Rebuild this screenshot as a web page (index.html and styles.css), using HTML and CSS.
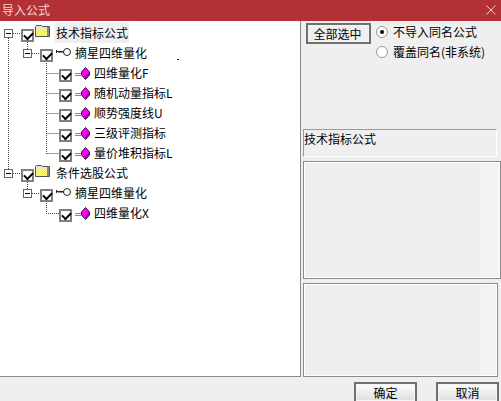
FILE: index.html
```html
<!DOCTYPE html>
<html lang="zh">
<head>
<meta charset="utf-8">
<title>导入公式</title>
<link rel="stylesheet" href="styles.css">
</head>
<body>
<svg class="defs" width="0" height="0">
  <defs>
    <pattern id="dither" width="2" height="2" patternUnits="userSpaceOnUse">
      <rect width="2" height="2" fill="#fff200"/>
      <rect width="1" height="1" fill="#ffff70"/>
      <rect x="1" y="1" width="1" height="1" fill="#ffff70"/>
    </pattern>
    <symbol id="folder" viewBox="0 0 15 12">
      <path d="M.5 11.500V1.500L1.500 .5H6.500L7.500 1.500H14.500V11.500Z" fill="#e4e4dc" stroke="#55554c"/>
      <rect x="1" y="4" width="11" height="7" fill="url(#dither)"/>
      <rect x="12" y="2" width="2" height="9" fill="#8a8a80"/>
    </symbol>
    <symbol id="key" viewBox="0 0 16 8">
      <circle cx="12" cy="4" r="3.500" fill="#fff" stroke="#222"/>
      <path d="M1.500 2V5M1.500 3.500H8.500" stroke="#222" fill="none"/>
      <path d="M3 4.500H8" stroke="#888" fill="none"/>
    </symbol>
    <symbol id="gem" viewBox="0 0 16 13">
      <path d="M1 6.500H7M1 8.500H7" stroke="#8a8a8a"/>
      <path d="M11.500 .5L15.500 5V8L11.500 12.500L7.500 8V5Z" fill="#f0f" stroke="#301030"/>
      <path d="M11.500 8L15 6V8L11.500 12Z" fill="#900090"/>
    </symbol>
  </defs>
</svg>
<div class="window">
  <header class="titlebar">
    <span class="title">导入公式</span>
    <svg class="close" width="10" height="10" viewBox="0 0 10 10"><path d="M.5 .5L9.500 9.500M9.500 .5L.5 9.500" stroke="#f0cfd0" fill="none"/></svg>
  </header>
  <main class="main">
    <section class="tree">
      <svg class="guides" width="100" height="225" viewBox="0 0 100 225">
        <path d="M8.500 17V148M13 12.500H21M13 152.500H21M27.500 21V28M27.500 161V168M32 32.500H40M32 172.500H40M46.500 42V133M46.500 52.500H59M46.500 72.500H59M46.500 92.500H59M46.500 112.500H59M46.500 132.500H59M46.500 182V192.500H59" stroke="#444" stroke-dasharray="1 1" fill="none"/>
      </svg>
      <span class="speck"></span>
      <div class="row lvl1"><span class="exp"></span><span class="chk"></span>
        <svg class="folder"><use href="#folder"/></svg>
        <span class="label selected">技术指标公式</span></div>
      <div class="row lvl2"><span class="exp"></span><span class="chk"></span>
        <svg class="key"><use href="#key"/></svg>
        <span class="label">摘星四维量化</span></div>
      <div class="row lvl3"><span class="chk"></span><svg class="gem"><use href="#gem"/></svg><span class="label">四维量化F</span></div>
      <div class="row lvl3"><span class="chk"></span><svg class="gem"><use href="#gem"/></svg><span class="label">随机动量指标L</span></div>
      <div class="row lvl3"><span class="chk"></span><svg class="gem"><use href="#gem"/></svg><span class="label">顺势强度线U</span></div>
      <div class="row lvl3"><span class="chk"></span><svg class="gem"><use href="#gem"/></svg><span class="label">三级评测指标</span></div>
      <div class="row lvl3"><span class="chk"></span><svg class="gem"><use href="#gem"/></svg><span class="label">量价堆积指标L</span></div>
      <div class="row lvl1"><span class="exp"></span><span class="chk"></span>
        <svg class="folder"><use href="#folder"/></svg>
        <span class="label">条件选股公式</span></div>
      <div class="row lvl2"><span class="exp"></span><span class="chk"></span>
        <svg class="key"><use href="#key"/></svg>
        <span class="label">摘星四维量化</span></div>
      <div class="row lvl3"><span class="chk"></span><svg class="gem"><use href="#gem"/></svg><span class="label">四维量化X</span></div>
    </section>
    <aside class="side">
      <div class="options">
        <button class="btn select-all" type="button">全部选中</button>
        <div class="radios">
          <div class="radio-row"><span class="radio on"></span><span>不导入同名公式</span></div>
          <div class="radio-row"><span class="radio"></span><span>覆盖同名(非系统)</span></div>
        </div>
      </div>
      <div class="info">技术指标公式</div>
      <div class="well well-top"></div>
      <div class="well well-bottom"></div>
    </aside>
  </main>
  <footer class="footer">
    <button class="btn action" type="button">确定</button>
    <button class="btn action" type="button">取消</button>
  </footer>
</div>
</body>
</html>
```
FILE: styles.css
```css
* { box-sizing: border-box; }
html, body { margin: 0; padding: 0; }
body {
  width: 501px;
  height: 401px;
  overflow: hidden;
  background: #efefef;
  color: #000;
  font: 12px/16px "Noto Sans CJK SC", "Liberation Sans", sans-serif;
}
.defs { position: absolute; }
.window { display: flex; flex-direction: column; height: 401px; }
.titlebar {
  flex: none;
  height: 21px;
  background: #b33035;
  color: #f3d6d6;
  display: flex;
  align-items: center;
  justify-content: space-between;
  padding: 0 5px 2px 2px;
}
.title { font-size: 12px; }
.close { display: block; }
.main { flex: none; height: 356px; display: flex; }
.tree {
  position: relative;
  flex: none;
  width: 301px;
  padding-top: 2px;
  background: #fff;
  border-right: 1px solid #8a8a8a;
  border-bottom: 1px solid #8a8a8a;
}
.guides { position: absolute; left: 0; top: 0; }
.speck { position: absolute; left: 177px; top: 38px; width: 2px; height: 1px; background: #333; }
.row { position: relative; display: flex; align-items: flex-start; height: 20px; }
.lvl1 { padding-left: 4px; }
.lvl2 { padding-left: 23px; }
.lvl3 { padding-left: 59px; }
.exp {
  position: relative;
  flex: none;
  width: 9px;
  height: 9px;
  margin: 6px 8px 0 0;
  background: #fff;
  border: 1px solid #666;
}
.exp::after {
  content: "";
  position: absolute;
  left: 1px;
  top: 3px;
  width: 5px;
  height: 1px;
  background: #000;
}
.chk {
  position: relative;
  flex: none;
  width: 13px;
  height: 13px;
  margin-top: 6px;
  background: #fff;
  border: 2px solid #808080;
}
.chk::after {
  content: "";
  position: absolute;
  left: 1px;
  top: 1px;
  width: 7px;
  height: 4px;
  border: solid #000;
  border-width: 0 0 2px 2px;
  transform: rotate(-45deg);
}
.folder { flex: none; width: 15px; height: 12px; margin: 2px 0 0 1px; }
.key { flex: none; width: 16px; height: 8px; margin: 5px 0 0 2px; }
.gem { flex: none; width: 16px; height: 13px; margin: 4px 0 0 2px; }
.label { white-space: nowrap; line-height: 20px; }
.lvl1 .label { margin-left: 4px; padding: 0 1px 0 2px; }
.lvl2 .label { margin-left: 4px; }
.lvl3 .label { margin-left: 4px; }
.selected { background: #efefef; }
.side {
  flex: none;
  width: 200px;
  padding-left: 2px;
  display: flex;
  flex-direction: column;
}
.options { flex: none; height: 108px; display: flex; align-items: flex-start; padding: 2px 0 0 3px; }
.btn {
  font: inherit;
  color: #000;
  padding: 0;
  border: 2px solid #707070;
  background: linear-gradient(#fdfdfd, #dedede);
  box-shadow: inset 0 0 0 1px #f4f4f4;
}
.select-all { flex: none; width: 65px; height: 21px; padding-right: 2px; background: #efefef; }
.radios { margin: -1px 0 0 5px; }
.radio-row { display: flex; align-items: center; height: 20px; gap: 5px; }
.radio {
  position: relative;
  display: block;
  width: 12px;
  height: 12px;
  border-radius: 50%;
  background: #fff;
  border: 1px solid #9a9a9a;
}
.radio.on::after {
  content: "";
  position: absolute;
  left: 3px;
  top: 3px;
  width: 4px;
  height: 4px;
  border-radius: 50%;
  background: #000;
}
.info {
  flex: none;
  height: 28px;
  margin-right: 4px;
  line-height: 18px;
  border: solid #fff;
  border-width: 0 1px 1px 0;
  border-top: 1px solid #9a9a9a;
  border-left: 1px solid #9a9a9a;
}
.well {
  flex: none;
  margin-top: 4px;
  background: linear-gradient(90deg, #efefef 177px, #f4f3f1 177px);
  border: 1px solid #8a8a8a;
  box-shadow: inset 0 0 0 1px #fff;
}
.well-top { height: 118px; margin-right: 0; }
.well-bottom { height: 94px; margin-right: 3px; }
.footer { flex: none; display: flex; align-items: flex-start; justify-content: flex-end; gap: 19px; padding: 5px 2px 0 0; }
.action { flex: none; width: 63px; height: 21px; }
```
